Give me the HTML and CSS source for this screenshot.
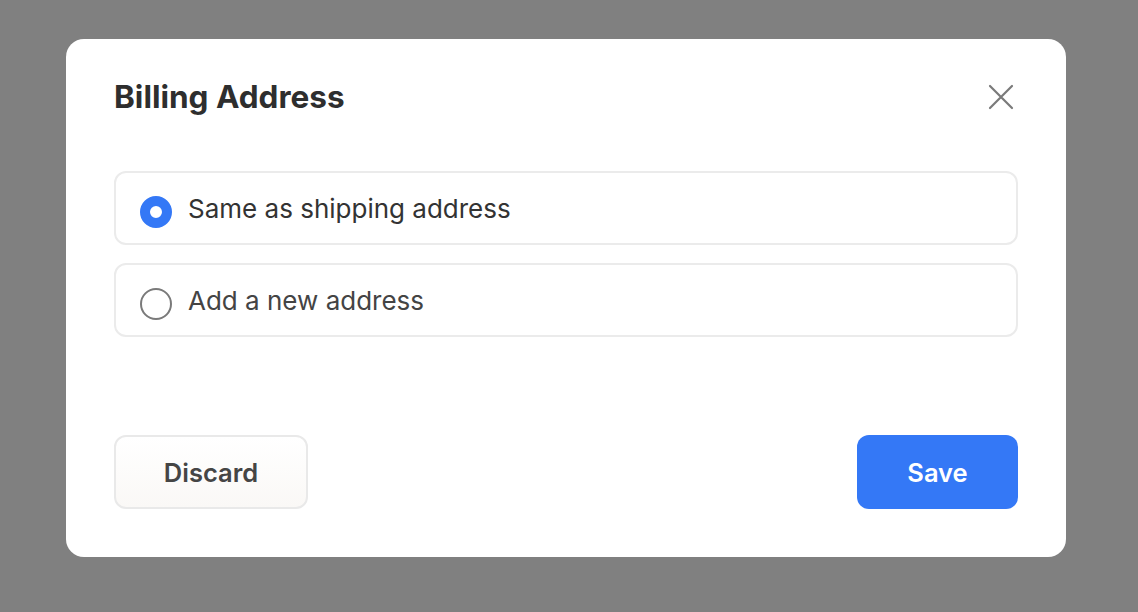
FILE: index.html
```html
<!DOCTYPE html>
<html>
<head>
<meta charset="utf-8">
<link rel="stylesheet" href="styles.css">
</head>
<body>
<div class="overlay">
  <div class="modal">
    <div class="header">
      <h1 class="title">Billing Address</h1>
      <button class="close" aria-label="Close">
        <svg width="26" height="26" viewBox="0 0 26 26"><path d="M2 2 L24 24 M24 2 L2 24" stroke="#7a7a7a" stroke-width="2.2" stroke-linecap="round" fill="none"/></svg>
      </button>
    </div>
    <div class="options">
      <label class="option">
        <span class="radio checked"></span>
        <span class="label">Same as shipping address</span>
      </label>
      <label class="option">
        <span class="radio"></span>
        <span class="label">Add a new address</span>
      </label>
    </div>
    <div class="footer">
      <button class="btn btn-secondary">Discard</button>
      <button class="btn btn-primary">Save</button>
    </div>
  </div>
</div>
</body>
</html>
```
FILE: styles.css
```css
* { box-sizing: border-box; }
html, body { margin: 0; padding: 0; }
body {
  background: #808080;
  font-family: Inter, "Noto Sans", sans-serif;
  width: 1138px;
  height: 612px;
  overflow: hidden;
}
.overlay {
  padding: 39px 72px 0 66px;
}
.modal {
  width: 1000px;
  height: 518px;
  background: #fff;
  border-radius: 18px;
  padding: 41px 48px 48px 48px;
  display: flex;
  flex-direction: column;
}
.header {
  display: flex;
  align-items: center;
  justify-content: space-between;
  height: 34px;
}
.title {
  margin: 0;
  font-size: 31.5px;
  font-weight: 700;
  color: #2e2e2e;
  line-height: 34px;
}
.close {
  border: none;
  background: none;
  padding: 0;
  width: 26px;
  height: 26px;
  margin-right: 4px;
  display: flex;
  cursor: pointer;
}
.options {
  margin-top: 57px;
  display: flex;
  flex-direction: column;
  gap: 18px;
}
.option {
  display: flex;
  align-items: center;
  height: 74px;
  border: 2px solid #ebebeb;
  border-radius: 12px;
  padding: 0 23px 0 24px;
  gap: 16px;
}
.radio {
  width: 32px;
  height: 32px;
  border-radius: 50%;
  border: 2px solid #7a7a7a;
  flex: none;
  margin-top: 8px;
}
.radio.checked {
  border: 10px solid #3478f6;
  background: #fff;
}
.label {
  font-size: 26px;
  color: #333;
}
.option:nth-child(2) .label { color: #444; }
.footer {
  margin-top: auto;
  display: flex;
  justify-content: space-between;
}
.btn {
  height: 74px;
  border-radius: 12px;
  font-family: Inter, "Noto Sans", sans-serif;
  font-size: 25.5px;
  font-weight: 600;
}
.btn-secondary {
  width: 194px;
  border: 2px solid #e9e9e9;
  background: linear-gradient(#ffffff, #faf8f6);
  color: #454545;
}
.btn-primary {
  width: 161px;
  border: none;
  background: #3478f6;
  color: #fff;
}
```
